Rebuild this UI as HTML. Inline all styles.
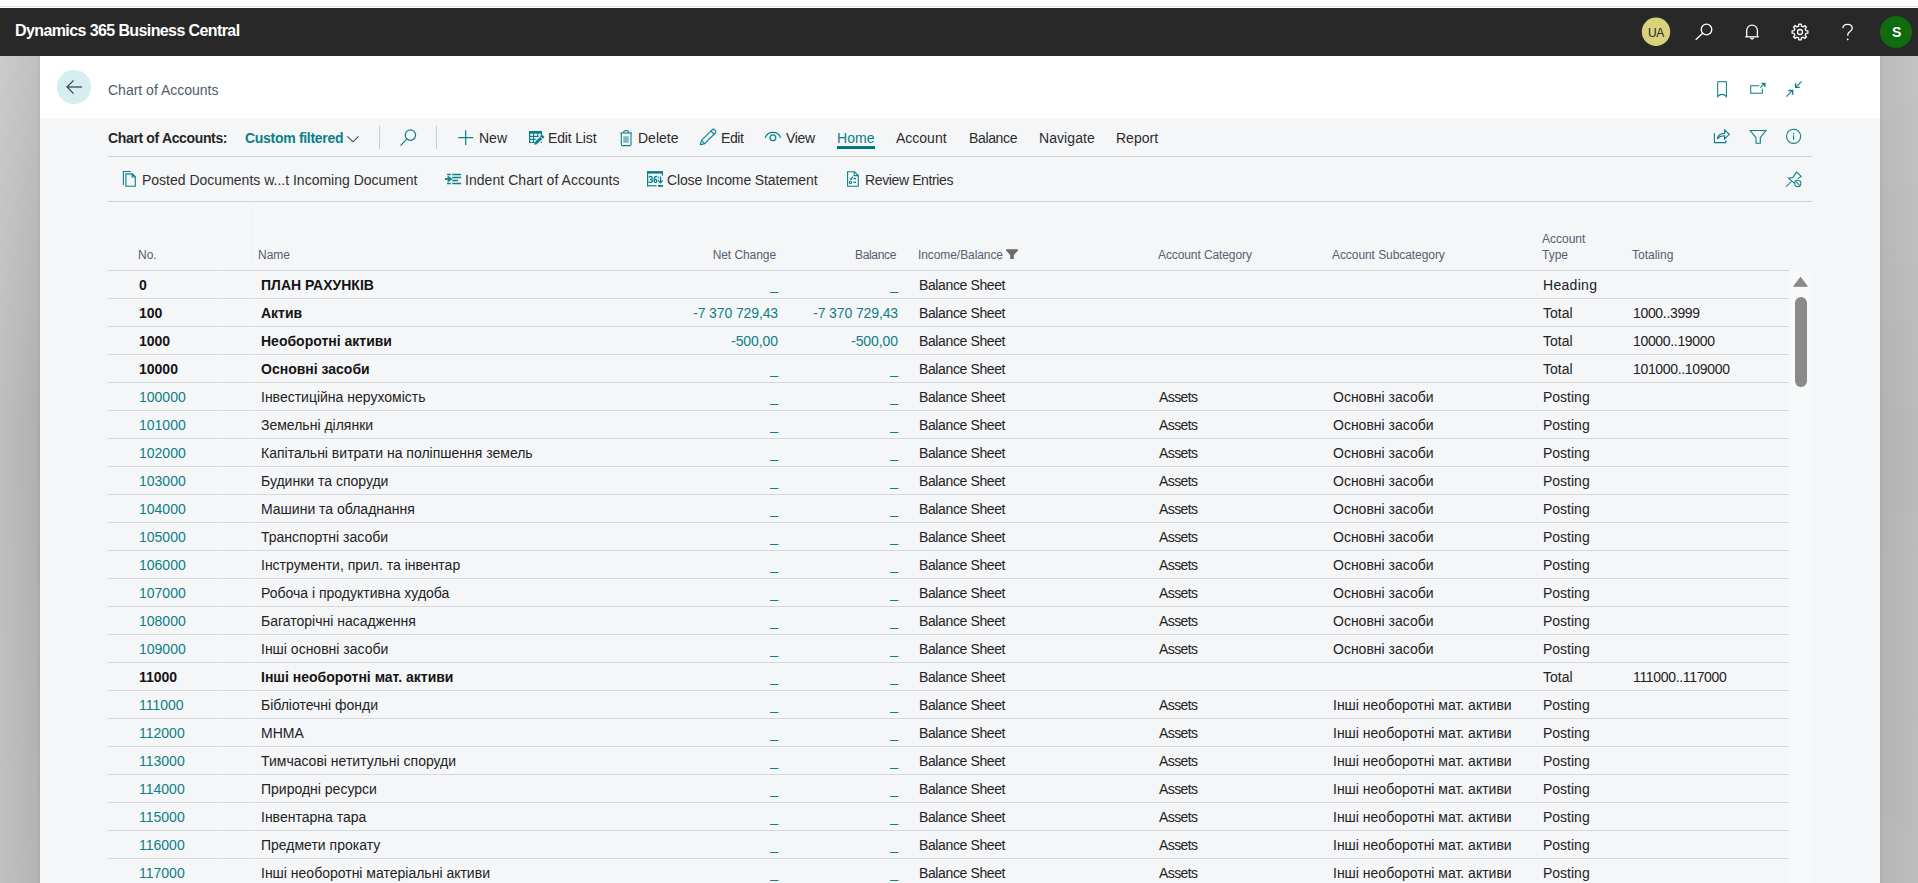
<!DOCTYPE html><html><head><meta charset="utf-8"><title>Chart of Accounts</title><style>
*{margin:0;padding:0;box-sizing:border-box}
html,body{width:1918px;height:883px;overflow:hidden;background:#fff;font-family:"Liberation Sans",sans-serif;}
.abs{position:absolute}
#topline{position:absolute;left:0;top:6px;width:1918px;height:1px;background:#e0e3e0}
#hdr{position:absolute;left:0;top:8px;width:1918px;height:48px;background:#282828}
#brand{position:absolute;left:15px;top:0;line-height:46px;font-size:16px;font-weight:bold;color:#fff;letter-spacing:-0.6px}
#lbar{position:absolute;left:0;top:56px;width:40px;height:827px;background:linear-gradient(180deg,rgba(255,255,255,0.2) 0%,rgba(255,255,255,0) 45%,rgba(255,255,255,0.05) 100%),linear-gradient(90deg,#bebebe 0%,#b1b1b1 90%,#aaaaaa 97%,#a8a8a8 100%)}
#rbar{position:absolute;left:1880px;top:56px;width:38px;height:827px;background:linear-gradient(180deg,rgba(255,255,255,0.12) 0%,rgba(255,255,255,0) 45%,rgba(255,255,255,0.04) 100%),linear-gradient(90deg,#a9a9a9 0%,#b0b0b0 6%,#b3b3b3 12%,#bbbbbb 100%)}
#panel{position:absolute;left:40px;top:56px;width:1840px;height:827px;background:#f5f6f8}
#phead{position:absolute;left:0;top:0;width:1840px;height:62px;background:#fff}
.t{position:absolute;white-space:nowrap;font-size:14px;line-height:16px}

.hl{position:absolute;height:1px;background:#d6d8db}
.vl{position:absolute;width:1px;background:#c8cacd}
.th{position:absolute;white-space:nowrap;font-size:12px;line-height:16px;color:#56606e}
.cell{position:absolute;white-space:nowrap;font-size:14px;line-height:16px;color:#222222}
.b{font-weight:bold;color:#141414}
svg{position:absolute;overflow:visible}
.teal{color:#0a7f87}
.cell.teal{color:#0a7f87}
</style></head><body>
<div id="topline"></div>
<div id="hdr"><div id="brand">Dynamics 365 Business Central</div></div>
<div id="lbar"></div><div id="rbar"></div>
<div id="panel"><div id="phead"></div></div>
<div class="abs" style="left:57px;top:70px;width:34px;height:34px;border-radius:50%;background:#d6eef1"></div>
<div class="t" style="left:108px;top:82px;color:#4f5b6b">Chart of Accounts</div>
<div class="t b" style="left:108px;top:130px;color:#262626;letter-spacing:-0.35px">Chart of Accounts:</div>
<div class="t teal" style="left:245px;top:130px;font-weight:bold;letter-spacing:-0.3px">Custom filtered</div>
<div class="vl" style="left:379px;top:126px;height:23px"></div>
<div class="vl" style="left:436px;top:126px;height:23px"></div>
<div class="t" style="left:479px;top:130px;color:#2b2b2b;letter-spacing:0px">New</div>
<div class="t" style="left:548px;top:130px;color:#2b2b2b;letter-spacing:-0.16px">Edit List</div>
<div class="t" style="left:638px;top:130px;color:#2b2b2b;letter-spacing:0px">Delete</div>
<div class="t" style="left:721px;top:130px;color:#2b2b2b;letter-spacing:-0.4px">Edit</div>
<div class="t" style="left:786px;top:130px;color:#2b2b2b;letter-spacing:-0.3px">View</div>
<div class="t" style="left:837px;top:130px;color:#0a7f87;letter-spacing:0.1px">Home</div>
<div class="t" style="left:896px;top:130px;color:#2b2b2b;letter-spacing:0px">Account</div>
<div class="t" style="left:969px;top:130px;color:#2b2b2b;letter-spacing:-0.35px">Balance</div>
<div class="t" style="left:1039px;top:130px;color:#2b2b2b;letter-spacing:0.07px">Navigate</div>
<div class="t" style="left:1116px;top:130px;color:#2b2b2b;letter-spacing:0px">Report</div>
<div class="abs" style="left:837px;top:146px;width:38px;height:2px;background:#0a7f87"></div>
<div class="hl" style="left:108px;top:156px;width:1704px;background:#cfd1d4"></div>
<div class="t" style="left:142px;top:172px;color:#303030;letter-spacing:0px">Posted Documents w...t Incoming Document</div>
<div class="t" style="left:465px;top:172px;color:#303030;letter-spacing:0.05px">Indent Chart of Accounts</div>
<div class="t" style="left:667px;top:172px;color:#303030;letter-spacing:-0.13px">Close Income Statement</div>
<div class="t" style="left:865px;top:172px;color:#303030;letter-spacing:-0.38px">Review Entries</div>
<div class="hl" style="left:108px;top:201px;width:1704px;background:#cfd1d4"></div>
<div class="th" style="left:138px;top:247px;letter-spacing:0px">No.</div>
<div class="th" style="left:258px;top:247px;letter-spacing:0px">Name</div>
<div class="th" style="right:1142px;top:247px;letter-spacing:-0.07px">Net Change</div>
<div class="th" style="right:1022px;top:247px;letter-spacing:-0.35px">Balance</div>
<div class="th" style="left:918px;top:247px;letter-spacing:-0.08px">Income/Balance</div>
<div class="th" style="left:1158px;top:247px;letter-spacing:-0.1px">Account Category</div>
<div class="th" style="left:1332px;top:247px;letter-spacing:-0.07px">Account Subcategory</div>
<div class="th" style="left:1632px;top:247px;letter-spacing:0px">Totaling</div>
<div class="th" style="left:1542px;top:231px">Account<br>Type</div>
<div class="hl" style="left:108px;top:270px;width:1681px"></div>
<div class="cell b" style="left:139px;top:277px">0</div>
<div class="cell b" style="left:261px;top:277px">ПЛАН РАХУНКІВ</div>
<div class="cell teal" style="right:1140px;top:277px;letter-spacing:-0.08px">_</div>
<div class="cell teal" style="right:1020px;top:277px;letter-spacing:-0.08px">_</div>
<div class="cell" style="left:919px;top:277px;letter-spacing:-0.38px">Balance Sheet</div>
<div class="cell" style="left:1543px;top:277px;letter-spacing:0.3px">Heading</div>
<div class="hl" style="left:108px;top:298px;width:1681px"></div>
<div class="cell b" style="left:139px;top:305px">100</div>
<div class="cell b" style="left:261px;top:305px">Актив</div>
<div class="cell teal" style="right:1140px;top:305px;letter-spacing:-0.12px">-7 370 729,43</div>
<div class="cell teal" style="right:1020px;top:305px;letter-spacing:-0.12px">-7 370 729,43</div>
<div class="cell" style="left:919px;top:305px;letter-spacing:-0.38px">Balance Sheet</div>
<div class="cell" style="left:1543px;top:305px;letter-spacing:0px">Total</div>
<div class="cell" style="left:1633px;top:305px;letter-spacing:-0.33px">1000..3999</div>
<div class="hl" style="left:108px;top:326px;width:1681px"></div>
<div class="cell b" style="left:139px;top:333px">1000</div>
<div class="cell b" style="left:261px;top:333px">Необоротні активи</div>
<div class="cell teal" style="right:1140px;top:333px;letter-spacing:-0.08px">-500,00</div>
<div class="cell teal" style="right:1020px;top:333px;letter-spacing:-0.08px">-500,00</div>
<div class="cell" style="left:919px;top:333px;letter-spacing:-0.38px">Balance Sheet</div>
<div class="cell" style="left:1543px;top:333px;letter-spacing:0px">Total</div>
<div class="cell" style="left:1633px;top:333px;letter-spacing:-0.33px">10000..19000</div>
<div class="hl" style="left:108px;top:354px;width:1681px"></div>
<div class="cell b" style="left:139px;top:361px">10000</div>
<div class="cell b" style="left:261px;top:361px">Основні засоби</div>
<div class="cell teal" style="right:1140px;top:361px;letter-spacing:-0.08px">_</div>
<div class="cell teal" style="right:1020px;top:361px;letter-spacing:-0.08px">_</div>
<div class="cell" style="left:919px;top:361px;letter-spacing:-0.38px">Balance Sheet</div>
<div class="cell" style="left:1543px;top:361px;letter-spacing:0px">Total</div>
<div class="cell" style="left:1633px;top:361px;letter-spacing:-0.33px">101000..109000</div>
<div class="hl" style="left:108px;top:382px;width:1681px"></div>
<div class="cell teal" style="left:139px;top:389px">100000</div>
<div class="cell" style="left:261px;top:389px">Інвестиційна нерухомість</div>
<div class="cell teal" style="right:1140px;top:389px;letter-spacing:-0.08px">_</div>
<div class="cell teal" style="right:1020px;top:389px;letter-spacing:-0.08px">_</div>
<div class="cell" style="left:919px;top:389px;letter-spacing:-0.38px">Balance Sheet</div>
<div class="cell" style="left:1159px;top:389px;letter-spacing:-0.6px">Assets</div>
<div class="cell" style="left:1333px;top:389px">Основні засоби</div>
<div class="cell" style="left:1543px;top:389px;letter-spacing:0px">Posting</div>
<div class="hl" style="left:108px;top:410px;width:1681px"></div>
<div class="cell teal" style="left:139px;top:417px">101000</div>
<div class="cell" style="left:261px;top:417px">Земельні ділянки</div>
<div class="cell teal" style="right:1140px;top:417px;letter-spacing:-0.08px">_</div>
<div class="cell teal" style="right:1020px;top:417px;letter-spacing:-0.08px">_</div>
<div class="cell" style="left:919px;top:417px;letter-spacing:-0.38px">Balance Sheet</div>
<div class="cell" style="left:1159px;top:417px;letter-spacing:-0.6px">Assets</div>
<div class="cell" style="left:1333px;top:417px">Основні засоби</div>
<div class="cell" style="left:1543px;top:417px;letter-spacing:0px">Posting</div>
<div class="hl" style="left:108px;top:438px;width:1681px"></div>
<div class="cell teal" style="left:139px;top:445px">102000</div>
<div class="cell" style="left:261px;top:445px">Капітальні витрати на поліпшення земель</div>
<div class="cell teal" style="right:1140px;top:445px;letter-spacing:-0.08px">_</div>
<div class="cell teal" style="right:1020px;top:445px;letter-spacing:-0.08px">_</div>
<div class="cell" style="left:919px;top:445px;letter-spacing:-0.38px">Balance Sheet</div>
<div class="cell" style="left:1159px;top:445px;letter-spacing:-0.6px">Assets</div>
<div class="cell" style="left:1333px;top:445px">Основні засоби</div>
<div class="cell" style="left:1543px;top:445px;letter-spacing:0px">Posting</div>
<div class="hl" style="left:108px;top:466px;width:1681px"></div>
<div class="cell teal" style="left:139px;top:473px">103000</div>
<div class="cell" style="left:261px;top:473px">Будинки та споруди</div>
<div class="cell teal" style="right:1140px;top:473px;letter-spacing:-0.08px">_</div>
<div class="cell teal" style="right:1020px;top:473px;letter-spacing:-0.08px">_</div>
<div class="cell" style="left:919px;top:473px;letter-spacing:-0.38px">Balance Sheet</div>
<div class="cell" style="left:1159px;top:473px;letter-spacing:-0.6px">Assets</div>
<div class="cell" style="left:1333px;top:473px">Основні засоби</div>
<div class="cell" style="left:1543px;top:473px;letter-spacing:0px">Posting</div>
<div class="hl" style="left:108px;top:494px;width:1681px"></div>
<div class="cell teal" style="left:139px;top:501px">104000</div>
<div class="cell" style="left:261px;top:501px">Машини та обладнання</div>
<div class="cell teal" style="right:1140px;top:501px;letter-spacing:-0.08px">_</div>
<div class="cell teal" style="right:1020px;top:501px;letter-spacing:-0.08px">_</div>
<div class="cell" style="left:919px;top:501px;letter-spacing:-0.38px">Balance Sheet</div>
<div class="cell" style="left:1159px;top:501px;letter-spacing:-0.6px">Assets</div>
<div class="cell" style="left:1333px;top:501px">Основні засоби</div>
<div class="cell" style="left:1543px;top:501px;letter-spacing:0px">Posting</div>
<div class="hl" style="left:108px;top:522px;width:1681px"></div>
<div class="cell teal" style="left:139px;top:529px">105000</div>
<div class="cell" style="left:261px;top:529px">Транспортні засоби</div>
<div class="cell teal" style="right:1140px;top:529px;letter-spacing:-0.08px">_</div>
<div class="cell teal" style="right:1020px;top:529px;letter-spacing:-0.08px">_</div>
<div class="cell" style="left:919px;top:529px;letter-spacing:-0.38px">Balance Sheet</div>
<div class="cell" style="left:1159px;top:529px;letter-spacing:-0.6px">Assets</div>
<div class="cell" style="left:1333px;top:529px">Основні засоби</div>
<div class="cell" style="left:1543px;top:529px;letter-spacing:0px">Posting</div>
<div class="hl" style="left:108px;top:550px;width:1681px"></div>
<div class="cell teal" style="left:139px;top:557px">106000</div>
<div class="cell" style="left:261px;top:557px">Інструменти, прил. та інвентар</div>
<div class="cell teal" style="right:1140px;top:557px;letter-spacing:-0.08px">_</div>
<div class="cell teal" style="right:1020px;top:557px;letter-spacing:-0.08px">_</div>
<div class="cell" style="left:919px;top:557px;letter-spacing:-0.38px">Balance Sheet</div>
<div class="cell" style="left:1159px;top:557px;letter-spacing:-0.6px">Assets</div>
<div class="cell" style="left:1333px;top:557px">Основні засоби</div>
<div class="cell" style="left:1543px;top:557px;letter-spacing:0px">Posting</div>
<div class="hl" style="left:108px;top:578px;width:1681px"></div>
<div class="cell teal" style="left:139px;top:585px">107000</div>
<div class="cell" style="left:261px;top:585px">Робоча і продуктивна худоба</div>
<div class="cell teal" style="right:1140px;top:585px;letter-spacing:-0.08px">_</div>
<div class="cell teal" style="right:1020px;top:585px;letter-spacing:-0.08px">_</div>
<div class="cell" style="left:919px;top:585px;letter-spacing:-0.38px">Balance Sheet</div>
<div class="cell" style="left:1159px;top:585px;letter-spacing:-0.6px">Assets</div>
<div class="cell" style="left:1333px;top:585px">Основні засоби</div>
<div class="cell" style="left:1543px;top:585px;letter-spacing:0px">Posting</div>
<div class="hl" style="left:108px;top:606px;width:1681px"></div>
<div class="cell teal" style="left:139px;top:613px">108000</div>
<div class="cell" style="left:261px;top:613px">Багаторічні насадження</div>
<div class="cell teal" style="right:1140px;top:613px;letter-spacing:-0.08px">_</div>
<div class="cell teal" style="right:1020px;top:613px;letter-spacing:-0.08px">_</div>
<div class="cell" style="left:919px;top:613px;letter-spacing:-0.38px">Balance Sheet</div>
<div class="cell" style="left:1159px;top:613px;letter-spacing:-0.6px">Assets</div>
<div class="cell" style="left:1333px;top:613px">Основні засоби</div>
<div class="cell" style="left:1543px;top:613px;letter-spacing:0px">Posting</div>
<div class="hl" style="left:108px;top:634px;width:1681px"></div>
<div class="cell teal" style="left:139px;top:641px">109000</div>
<div class="cell" style="left:261px;top:641px">Інші основні засоби</div>
<div class="cell teal" style="right:1140px;top:641px;letter-spacing:-0.08px">_</div>
<div class="cell teal" style="right:1020px;top:641px;letter-spacing:-0.08px">_</div>
<div class="cell" style="left:919px;top:641px;letter-spacing:-0.38px">Balance Sheet</div>
<div class="cell" style="left:1159px;top:641px;letter-spacing:-0.6px">Assets</div>
<div class="cell" style="left:1333px;top:641px">Основні засоби</div>
<div class="cell" style="left:1543px;top:641px;letter-spacing:0px">Posting</div>
<div class="hl" style="left:108px;top:662px;width:1681px"></div>
<div class="cell b" style="left:139px;top:669px">11000</div>
<div class="cell b" style="left:261px;top:669px">Інші необоротні мат. активи</div>
<div class="cell teal" style="right:1140px;top:669px;letter-spacing:-0.08px">_</div>
<div class="cell teal" style="right:1020px;top:669px;letter-spacing:-0.08px">_</div>
<div class="cell" style="left:919px;top:669px;letter-spacing:-0.38px">Balance Sheet</div>
<div class="cell" style="left:1543px;top:669px;letter-spacing:0px">Total</div>
<div class="cell" style="left:1633px;top:669px;letter-spacing:-0.33px">111000..117000</div>
<div class="hl" style="left:108px;top:690px;width:1681px"></div>
<div class="cell teal" style="left:139px;top:697px">111000</div>
<div class="cell" style="left:261px;top:697px">Бібліотечні фонди</div>
<div class="cell teal" style="right:1140px;top:697px;letter-spacing:-0.08px">_</div>
<div class="cell teal" style="right:1020px;top:697px;letter-spacing:-0.08px">_</div>
<div class="cell" style="left:919px;top:697px;letter-spacing:-0.38px">Balance Sheet</div>
<div class="cell" style="left:1159px;top:697px;letter-spacing:-0.6px">Assets</div>
<div class="cell" style="left:1333px;top:697px">Інші необоротні мат. активи</div>
<div class="cell" style="left:1543px;top:697px;letter-spacing:0px">Posting</div>
<div class="hl" style="left:108px;top:718px;width:1681px"></div>
<div class="cell teal" style="left:139px;top:725px">112000</div>
<div class="cell" style="left:261px;top:725px">МНМА</div>
<div class="cell teal" style="right:1140px;top:725px;letter-spacing:-0.08px">_</div>
<div class="cell teal" style="right:1020px;top:725px;letter-spacing:-0.08px">_</div>
<div class="cell" style="left:919px;top:725px;letter-spacing:-0.38px">Balance Sheet</div>
<div class="cell" style="left:1159px;top:725px;letter-spacing:-0.6px">Assets</div>
<div class="cell" style="left:1333px;top:725px">Інші необоротні мат. активи</div>
<div class="cell" style="left:1543px;top:725px;letter-spacing:0px">Posting</div>
<div class="hl" style="left:108px;top:746px;width:1681px"></div>
<div class="cell teal" style="left:139px;top:753px">113000</div>
<div class="cell" style="left:261px;top:753px">Тимчасові нетитульні споруди</div>
<div class="cell teal" style="right:1140px;top:753px;letter-spacing:-0.08px">_</div>
<div class="cell teal" style="right:1020px;top:753px;letter-spacing:-0.08px">_</div>
<div class="cell" style="left:919px;top:753px;letter-spacing:-0.38px">Balance Sheet</div>
<div class="cell" style="left:1159px;top:753px;letter-spacing:-0.6px">Assets</div>
<div class="cell" style="left:1333px;top:753px">Інші необоротні мат. активи</div>
<div class="cell" style="left:1543px;top:753px;letter-spacing:0px">Posting</div>
<div class="hl" style="left:108px;top:774px;width:1681px"></div>
<div class="cell teal" style="left:139px;top:781px">114000</div>
<div class="cell" style="left:261px;top:781px">Природні ресурси</div>
<div class="cell teal" style="right:1140px;top:781px;letter-spacing:-0.08px">_</div>
<div class="cell teal" style="right:1020px;top:781px;letter-spacing:-0.08px">_</div>
<div class="cell" style="left:919px;top:781px;letter-spacing:-0.38px">Balance Sheet</div>
<div class="cell" style="left:1159px;top:781px;letter-spacing:-0.6px">Assets</div>
<div class="cell" style="left:1333px;top:781px">Інші необоротні мат. активи</div>
<div class="cell" style="left:1543px;top:781px;letter-spacing:0px">Posting</div>
<div class="hl" style="left:108px;top:802px;width:1681px"></div>
<div class="cell teal" style="left:139px;top:809px">115000</div>
<div class="cell" style="left:261px;top:809px">Інвентарна тара</div>
<div class="cell teal" style="right:1140px;top:809px;letter-spacing:-0.08px">_</div>
<div class="cell teal" style="right:1020px;top:809px;letter-spacing:-0.08px">_</div>
<div class="cell" style="left:919px;top:809px;letter-spacing:-0.38px">Balance Sheet</div>
<div class="cell" style="left:1159px;top:809px;letter-spacing:-0.6px">Assets</div>
<div class="cell" style="left:1333px;top:809px">Інші необоротні мат. активи</div>
<div class="cell" style="left:1543px;top:809px;letter-spacing:0px">Posting</div>
<div class="hl" style="left:108px;top:830px;width:1681px"></div>
<div class="cell teal" style="left:139px;top:837px">116000</div>
<div class="cell" style="left:261px;top:837px">Предмети прокату</div>
<div class="cell teal" style="right:1140px;top:837px;letter-spacing:-0.08px">_</div>
<div class="cell teal" style="right:1020px;top:837px;letter-spacing:-0.08px">_</div>
<div class="cell" style="left:919px;top:837px;letter-spacing:-0.38px">Balance Sheet</div>
<div class="cell" style="left:1159px;top:837px;letter-spacing:-0.6px">Assets</div>
<div class="cell" style="left:1333px;top:837px">Інші необоротні мат. активи</div>
<div class="cell" style="left:1543px;top:837px;letter-spacing:0px">Posting</div>
<div class="hl" style="left:108px;top:858px;width:1681px"></div>
<div class="cell teal" style="left:139px;top:865px">117000</div>
<div class="cell" style="left:261px;top:865px">Інші необоротні матеріальні активи</div>
<div class="cell teal" style="right:1140px;top:865px;letter-spacing:-0.08px">_</div>
<div class="cell teal" style="right:1020px;top:865px;letter-spacing:-0.08px">_</div>
<div class="cell" style="left:919px;top:865px;letter-spacing:-0.38px">Balance Sheet</div>
<div class="cell" style="left:1159px;top:865px;letter-spacing:-0.6px">Assets</div>
<div class="cell" style="left:1333px;top:865px">Інші необоротні мат. активи</div>
<div class="cell" style="left:1543px;top:865px;letter-spacing:0px">Posting</div>
<div class="hl" style="left:108px;top:886px;width:1681px"></div>
<div class="abs" style="left:223px;top:270px;width:1px;height:1px;background:#eceef0"></div>
<div class="abs" style="left:252px;top:270px;width:1px;height:1px;background:#eceef0"></div>
<div class="abs" style="left:223px;top:298px;width:1px;height:1px;background:#eceef0"></div>
<div class="abs" style="left:252px;top:298px;width:1px;height:1px;background:#eceef0"></div>
<div class="abs" style="left:223px;top:326px;width:1px;height:1px;background:#eceef0"></div>
<div class="abs" style="left:252px;top:326px;width:1px;height:1px;background:#eceef0"></div>
<div class="abs" style="left:223px;top:354px;width:1px;height:1px;background:#eceef0"></div>
<div class="abs" style="left:252px;top:354px;width:1px;height:1px;background:#eceef0"></div>
<div class="abs" style="left:223px;top:382px;width:1px;height:1px;background:#eceef0"></div>
<div class="abs" style="left:252px;top:382px;width:1px;height:1px;background:#eceef0"></div>
<div class="abs" style="left:223px;top:410px;width:1px;height:1px;background:#eceef0"></div>
<div class="abs" style="left:252px;top:410px;width:1px;height:1px;background:#eceef0"></div>
<div class="abs" style="left:223px;top:438px;width:1px;height:1px;background:#eceef0"></div>
<div class="abs" style="left:252px;top:438px;width:1px;height:1px;background:#eceef0"></div>
<div class="abs" style="left:223px;top:466px;width:1px;height:1px;background:#eceef0"></div>
<div class="abs" style="left:252px;top:466px;width:1px;height:1px;background:#eceef0"></div>
<div class="abs" style="left:223px;top:494px;width:1px;height:1px;background:#eceef0"></div>
<div class="abs" style="left:252px;top:494px;width:1px;height:1px;background:#eceef0"></div>
<div class="abs" style="left:223px;top:522px;width:1px;height:1px;background:#eceef0"></div>
<div class="abs" style="left:252px;top:522px;width:1px;height:1px;background:#eceef0"></div>
<div class="abs" style="left:223px;top:550px;width:1px;height:1px;background:#eceef0"></div>
<div class="abs" style="left:252px;top:550px;width:1px;height:1px;background:#eceef0"></div>
<div class="abs" style="left:223px;top:578px;width:1px;height:1px;background:#eceef0"></div>
<div class="abs" style="left:252px;top:578px;width:1px;height:1px;background:#eceef0"></div>
<div class="abs" style="left:223px;top:606px;width:1px;height:1px;background:#eceef0"></div>
<div class="abs" style="left:252px;top:606px;width:1px;height:1px;background:#eceef0"></div>
<div class="abs" style="left:223px;top:634px;width:1px;height:1px;background:#eceef0"></div>
<div class="abs" style="left:252px;top:634px;width:1px;height:1px;background:#eceef0"></div>
<div class="abs" style="left:223px;top:662px;width:1px;height:1px;background:#eceef0"></div>
<div class="abs" style="left:252px;top:662px;width:1px;height:1px;background:#eceef0"></div>
<div class="abs" style="left:223px;top:690px;width:1px;height:1px;background:#eceef0"></div>
<div class="abs" style="left:252px;top:690px;width:1px;height:1px;background:#eceef0"></div>
<div class="abs" style="left:223px;top:718px;width:1px;height:1px;background:#eceef0"></div>
<div class="abs" style="left:252px;top:718px;width:1px;height:1px;background:#eceef0"></div>
<div class="abs" style="left:223px;top:746px;width:1px;height:1px;background:#eceef0"></div>
<div class="abs" style="left:252px;top:746px;width:1px;height:1px;background:#eceef0"></div>
<div class="abs" style="left:223px;top:774px;width:1px;height:1px;background:#eceef0"></div>
<div class="abs" style="left:252px;top:774px;width:1px;height:1px;background:#eceef0"></div>
<div class="abs" style="left:223px;top:802px;width:1px;height:1px;background:#eceef0"></div>
<div class="abs" style="left:252px;top:802px;width:1px;height:1px;background:#eceef0"></div>
<div class="abs" style="left:223px;top:830px;width:1px;height:1px;background:#eceef0"></div>
<div class="abs" style="left:252px;top:830px;width:1px;height:1px;background:#eceef0"></div>
<div class="abs" style="left:223px;top:858px;width:1px;height:1px;background:#eceef0"></div>
<div class="abs" style="left:252px;top:858px;width:1px;height:1px;background:#eceef0"></div>
<div class="abs" style="left:223px;top:886px;width:1px;height:1px;background:#eceef0"></div>
<div class="abs" style="left:252px;top:886px;width:1px;height:1px;background:#eceef0"></div>
<div class="abs" style="left:252px;top:202px;width:1px;height:68px;background:#f1f2f4"></div>
<div class="abs" style="left:1789px;top:271px;width:23px;height:612px;background:#f8f9fa"></div>
<div class="abs" style="left:1795px;top:297px;width:12px;height:90px;border-radius:6px;background:#8a8a8a"></div>
<svg width="1918" height="883" viewBox="0 0 1918 883" style="position:absolute;left:0;top:0" fill="none" stroke-linecap="butt">
<circle cx="1656" cy="31.8" r="14.2" fill="#d8d27c"/>
<g stroke="#fff" stroke-width="1.3">
<circle cx="1706.5" cy="29.5" r="5.3"/><line x1="1695.7" y1="39.7" x2="1702.7" y2="33.3"/>
<path d="M1746.7,36.6 V30.4 A5.35,5.35 0 0 1 1757.4,30.4 V36.6"/><path d="M1745.2,36.8 H1758.8"/><path d="M1750.6,37.6 A1.5,1.4 0 0 0 1753.6,37.6"/>
<path d="M1798.60,26.17 L1798.81,24.09 L1801.19,24.09 L1801.40,26.17 L1803.13,26.88 L1804.75,25.56 L1806.44,27.25 L1805.12,28.87 L1805.83,30.60 L1807.91,30.81 L1807.91,33.19 L1805.83,33.40 L1805.12,35.13 L1806.44,36.75 L1804.75,38.44 L1803.13,37.12 L1801.40,37.83 L1801.19,39.91 L1798.81,39.91 L1798.60,37.83 L1796.87,37.12 L1795.25,38.44 L1793.56,36.75 L1794.88,35.13 L1794.17,33.40 L1792.09,33.19 L1792.09,30.81 L1794.17,30.60 L1794.88,28.87 L1793.56,27.25 L1795.25,25.56 L1796.87,26.88 Z" stroke-linejoin="round"/><circle cx="1800" cy="32" r="2.5"/>
<path d="M1842.9,28.2 C1842.9,25.6 1845,24.3 1847.6,24.3 C1850.2,24.3 1852.2,25.8 1852.2,28.2 C1852.2,30.5 1850.2,31.4 1848.9,32.6 C1848,33.4 1847.7,34.3 1847.7,35.8"/>
</g><circle cx="1847.7" cy="39.4" r="0.9" fill="#fff"/>
<circle cx="1896" cy="32" r="16" fill="#0f6b10"/>
<circle cx="74" cy="86.9" r="17" fill="#d6eef1"/>
<path d="M67,87 H82" stroke="#5d6767" stroke-width="1.6"/><path d="M73.6,80.4 L67,87 L73.6,93.6" stroke="#2f3535" stroke-width="1.1"/>
<g stroke="#0a7f87" stroke-width="1.05">
<path d="M1717.7,96.6 V81.7 H1726.4 V96.6 Q1722.05,92.2 1717.7,96.6 Z" stroke-linejoin="miter"/>
<path d="M1759.2,85.8 H1750.7 V93.3 H1762.3 V88.8"/><path d="M1760.3,87.6 L1764.6,83.3" /><path d="M1761.6,83.5 H1764.8 V86.7" stroke-width="1.5"/>
<path d="M1801.6,81.3 L1795.6,87.3"/><path d="M1795.6,83.2 V87.4 H1799.8" stroke-width="1.4"/><path d="M1786.4,96.6 L1792.5,90.5"/><path d="M1788.3,90.5 H1792.6 V94.7" stroke-width="1.4"/>
</g>
<path d="M347.4,136.3 L353,141.8 L358.6,136.3" stroke="#444" stroke-width="1.05"/>
<g stroke="#0a7f87" stroke-width="1.2">
<circle cx="410.4" cy="135.1" r="5.2"/><line x1="400.6" y1="145.6" x2="406.6" y2="139.2"/>
<path d="M458.3,137.6 H473.2 M465.7,130.2 V145"/>
</g>
<g fill="#0a7f87">
<rect x="529" y="131" width="13" height="2.7"/>
<rect x="529" y="131" width="1.2" height="11.8"/>
<rect x="533" y="133" width="1.1" height="9.8"/>
<rect x="537.1" y="133" width="1" height="4"/>
<rect x="529" y="135.8" width="12.6" height="1.2"/>
<rect x="529" y="138.8" width="10" height="1.2"/>
<rect x="529" y="141.8" width="7" height="1.1"/>
<rect x="540.8" y="131" width="1.2" height="5.5"/>
<path d="M540.2,142.9 H542 V141 Z"/>
</g>
<path d="M535.6,143.4 L541.3,137.7" stroke="#f5f6f8" stroke-width="5.2"/>
<path d="M541.2,136 L543.6,138.4" stroke="#f5f6f8" stroke-width="2"/>
<path d="M536.2,142.8 L541.0,138.0" stroke="#0a7f87" stroke-width="3"/>
<path d="M534.2,144.8 L534.9,141.5 L537.5,144.1 Z" fill="#0a7f87"/>
<path d="M540.4,136.4 L542.1,134.7 L544.5,137.1 L542.8,138.8 Z" fill="#0a7f87"/>
<g stroke="#0a7f87" stroke-width="1.1">
<path d="M620.3,133 H631.8"/><path d="M621.3,133 V144.2 Q621.3,145.6 622.7,145.6 H629.6 Q631,145.6 631,144.2 V133"/>
<path d="M623.4,132.6 Q623.6,130.5 626.2,130.5 Q628.8,130.5 629,132.6"/>
</g>
<rect x="623.2" y="136.2" width="5.6" height="6.6" fill="#7fbcc1"/>
<g stroke="#0a7f87" stroke-width="1.1" stroke-linejoin="round">
<path d="M700.3,144.8 L701.5,140.4 L712.1,129.8 Q713.3,128.6 714.5,129.8 L715.3,130.6 Q716.5,131.8 715.3,133 L704.7,143.6 Z"/><path d="M701.5,140.4 L704.7,143.6 M710.9,131 L714.1,134.2"/>
</g>
<g stroke="#0a7f87" stroke-width="1.2">
<path d="M765.2,137.9 A8.2,8.2 0 0 1 780.7,137.9"/><circle cx="772.9" cy="137.8" r="2.9"/>
</g>
<rect x="837" y="147" width="38" height="2" fill="#00777f"/>
<g stroke="#0a7f87" stroke-width="1.1" stroke-linejoin="miter">
<path d="M1714.4,133 V142.6 H1725.8 V140.2"/>
<path d="M1717.2,138.8 Q1718.4,133.5 1724.6,133.4 V130 L1729.3,134.3 L1724.6,138.9 V135.7 Q1720,135.6 1717.2,138.8 Z"/>
<path d="M1750.2,130.5 H1766 L1760.3,137.6 V143.3 H1756 V137.6 Z"/>
<circle cx="1793.6" cy="136.3" r="7.1"/><path d="M1793.6,135.3 V139.9"/>
</g>
<circle cx="1793.6" cy="133.7" r="0.75" fill="#0a7f87"/>
<g stroke="#0a7f87" stroke-width="1.05">
<path d="M1786.2,186.7 L1791.9,181"/>
<path d="M1794.9,183.7 L1788.3,178.2 L1793,177.4 L1796.5,172 L1801.2,176.4 L1797.8,178.6"/>
<circle cx="1797.8" cy="183.4" r="3.1"/><path d="M1795.7,181.3 L1799.9,185.5"/>
</g>
<g stroke="#0a7f87" stroke-width="1.1">
<path d="M123.4,184.9 V171.5 H130.9"/>
<path d="M125.9,186.3 V173.9 H132.4 L135.3,176.8 V186.3 Z M132.2,174 V177 H135.2"/>
<path d="M447.1,174.5 H450.8 M452.2,174.5 H461.1 M452.2,177.5 H461.1 M452.2,180.5 H457.9 M447.1,183.5 H450.8 M452.2,183.5 H461.1" stroke-width="1.3"/>
<path d="M445,179 H450.5" stroke-width="1.8"/><path d="M447.6,176.3 L451.2,179 L447.6,181.7" stroke-width="1.5"/>
<path d="M847.6,186.3 V171.7 H854.5 L858.3,175.5 V186.3 Z M854.2,171.8 V175.6 H858.2"/>
<path d="M849.8,178.6 L851,179.5 L852.8,176.6 M853.4,178.6 H856 M853.4,182.4 H856"/><circle cx="850.5" cy="182.4" r="1.1"/>
</g>
<g fill="#0a7f87"><rect x="647" y="171.1" width="16" height="2.5"/><rect x="647" y="171.1" width="1.2" height="15.3"/><rect x="647" y="185.2" width="9.5" height="1.2"/><rect x="658" y="185.0" width="5" height="1.8"/><rect x="661.8" y="171.1" width="1.2" height="4.6"/></g>
<g stroke="#0a7f87" stroke-width="1.35" stroke-linecap="round" stroke-linejoin="round">
<path d="M649.2,177 Q650.5,176.1 651.6,176.6 Q652.4,177.3 652,178.5 Q651.5,179.3 650.4,179.4 Q652.6,179.7 652.4,181.3 Q652,182.4 650.6,182.4 Q649.6,182.4 649,181.9"/>
<path d="M656.4,176.5 Q654.9,176.3 654.3,178.2 Q653.9,180.4 654.3,181.5 Q654.8,182.5 655.6,182.4 Q656.8,182.3 656.8,180.9 Q656.8,179.5 655.6,179.4 Q654.5,179.4 654.1,180.3"/>
</g>
<path d="M660.5,176.5 V182.5 M658.2,180.4 L660.5,182.9 L662.8,180.4" stroke="#0a7f87" stroke-width="1.3"/><path d="M658.3,176.4 V178.6" stroke="#0a7f87" stroke-width="0.9"/>
<path d="M1006,249.2 H1018 V250.6 L1013.8,254.9 V258.9 H1010.2 V254.9 L1006,250.6 Z" fill="#6b6b6b"/>
<path d="M1800.5,277.2 L1807.3,286.3 H1793.7 Z" fill="#8a8a8a" stroke="#8a8a8a" stroke-width="1" stroke-linejoin="round"/>
</svg>
<div class="t" style="left:1648px;top:25px;font-size:12px;letter-spacing:-0.3px;color:#262626">UA</div>
<div class="t" style="left:1892px;top:24px;font-weight:bold;color:#fff">S</div>
</body></html>
